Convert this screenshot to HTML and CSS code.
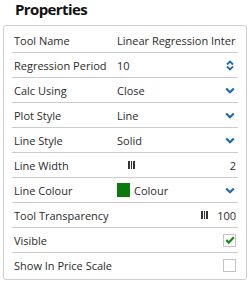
FILE: index.html
```
<!DOCTYPE html>
<html lang="en">
<head>
  <meta charset="UTF-8">
  <title>Properties</title>
  <link rel="stylesheet" href="styles.css">
</head>
<body>

  <div class="title">Properties</div>

  <div class="panel">
    <div class="row">
      <div class="label">Tool Name</div>
      <div class="value">Linear Regression Intercept</div>
    </div>
    <div class="row">
      <div class="label">Regression Period</div>
      <div class="value">10</div>
      <svg class="spin" width="8" height="11" viewBox="0 0 8 11"><path d="M1 4.5 L4 1.5 L7 4.5 M1 6.5 L4 9.5 L7 6.5" /></svg>
    </div>
    <div class="row">
      <div class="label">Calc Using</div>
      <div class="value">Close</div>
      <svg class="chev" width="10" height="7" viewBox="0 0 10 7"><path d="M1.2 1.5 L5 5.2 L8.8 1.5" /></svg>
    </div>
    <div class="row">
      <div class="label">Plot Style</div>
      <div class="value">Line</div>
      <svg class="chev" width="10" height="7" viewBox="0 0 10 7"><path d="M1.2 1.5 L5 5.2 L8.8 1.5" /></svg>
    </div>
    <div class="row">
      <div class="label">Line Style</div>
      <div class="value">Solid</div>
      <svg class="chev" width="10" height="7" viewBox="0 0 10 7"><path d="M1.2 1.5 L5 5.2 L8.8 1.5" /></svg>
    </div>
    <div class="row">
      <div class="label">Line Width</div>
      <div class="slider">
        <span class="grip" style="margin-left: 11px"><i></i><i></i><i></i></span>
      </div>
      <div class="num">2</div>
    </div>
    <div class="row">
      <div class="label">Line Colour</div>
      <div class="value"><span class="swatch"></span>Colour</div>
      <svg class="chev" width="10" height="7" viewBox="0 0 10 7"><path d="M1.2 1.5 L5 5.2 L8.8 1.5" /></svg>
    </div>
    <div class="row">
      <div class="label">Tool Transparency</div>
      <div class="slider">
        <span class="grip" style="margin-left: 84px"><i></i><i></i><i></i></span>
      </div>
      <div class="num">100</div>
    </div>
    <div class="row">
      <div class="label">Visible</div>
      <div class="value"></div>
      <span class="check">
        <svg width="10" height="10" viewBox="0 0 10 10"><path d="M1.3 5 L3.8 7.6 L8.8 2.2" /></svg>
      </span>
    </div>
    <div class="row">
      <div class="label">Show In Price Scale</div>
      <div class="value"></div>
      <span class="check"></span>
    </div>
  </div>

</body>
</html>
```

FILE: styles.css
```
body {
  margin: 0;
  font-family: 'Open Sans', 'DejaVu Sans', sans-serif;
  font-size: 11px;
  color: #2b2b2b;
  background: #fff;
}
.title {
  font-size: 15px;
  font-weight: bold;
  line-height: 18px;
  letter-spacing: -0.6px;
  color: #111;
  padding-left: 15px;
  margin-bottom: 7px;
}
.panel {
  margin: 0 3px;
  border: 1px solid #cfcfcf;
  border-radius: 3px;
  padding: 2px 8px;
}
.row {
  display: flex;
  align-items: center;
  height: 24px;
  border-bottom: 1px solid #cccccc;
  padding: 0 2px;
  white-space: nowrap;
  overflow: hidden;
}
.row:last-child {
  border-bottom: none;
}
.label {
  width: 103px;
  flex: none;
}
.value {
  flex: 1;
  display: flex;
  align-items: center;
  overflow: hidden;
}
.chev path,
.spin path {
  fill: none;
  stroke: #1d6cb0;
  stroke-width: 2.2;
}
.spin path {
  stroke-width: 1.8;
}
.chev {
  margin-right: 1px;
}
.spin {
  margin-right: 2px;
}
.swatch {
  display: inline-block;
  width: 13px;
  height: 14px;
  background: #0a7a0a;
  margin-right: 4px;
}
.slider {
  flex: 1;
  display: flex;
  align-items: center;
}
.grip {
  display: flex;
  gap: 1px;
}
.grip i {
  display: block;
  width: 1.5px;
  height: 8px;
  background: #333;
}
.num {
  flex: none;
  margin-left: 3px;
}
.check {
  width: 11px;
  height: 11px;
  border: 1px solid #c4c4c4;
  display: flex;
  align-items: center;
  justify-content: center;
}
.check path {
  fill: none;
  stroke: #1a8a1a;
  stroke-width: 2.2;
}
```
